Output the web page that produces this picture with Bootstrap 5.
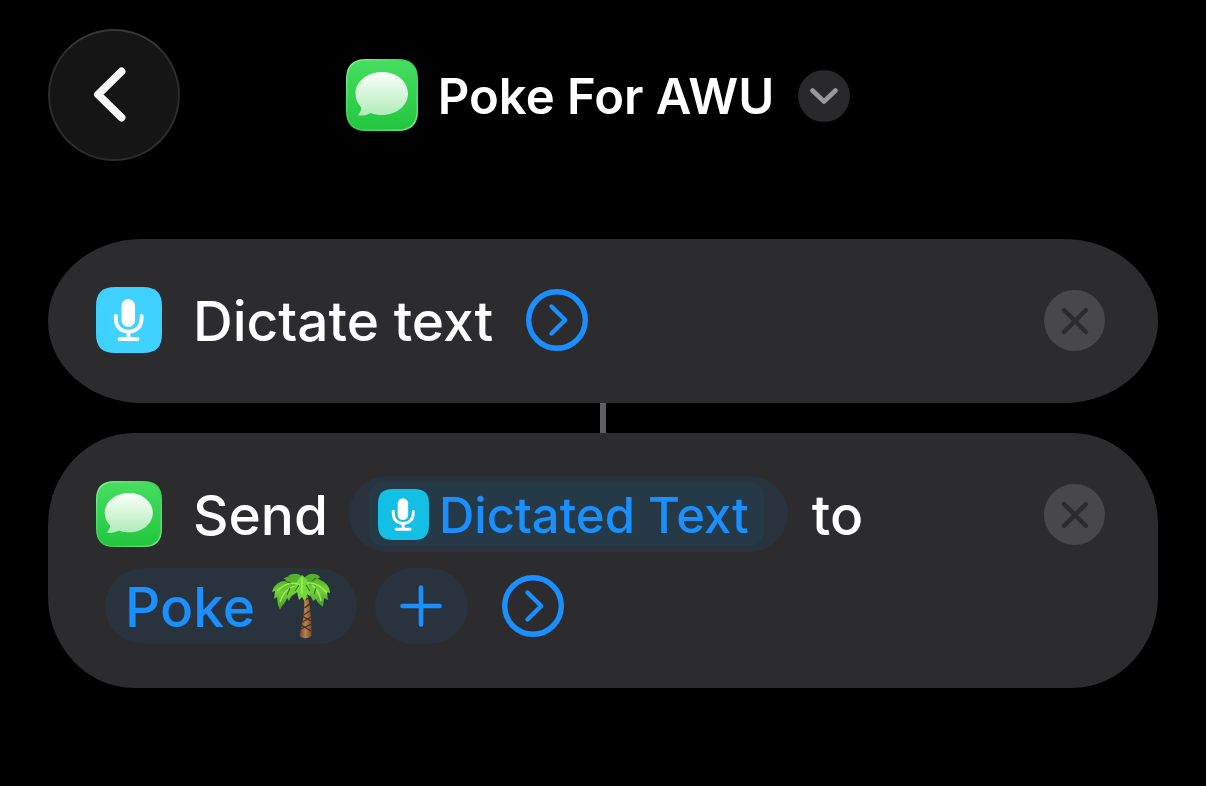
<!DOCTYPE html>
<html lang="en" data-bs-theme="dark">
<head>
<meta charset="utf-8">
<meta name="viewport" content="width=device-width, initial-scale=1">
<title>Poke For AWU</title>
<link href="https://cdn.jsdelivr.net/npm/bootstrap@5.3.0/dist/css/bootstrap.min.css" rel="stylesheet">
<style>
  body { background: #000; color: #fff; font-family: Inter, "Liberation Sans", sans-serif; }
  button { border: 0; padding: 0; background: none; color: inherit; }
  svg { display: block; }
  .page-pad { padding: 29px 48px; }
  .topbar { display: grid; grid-template-columns: 132px 1fr 132px; margin-bottom: 78px; }
  .back-btn { width: 132px; height: 132px; background: #151515; border: 2px solid #2c2c2c; border-top-color: #363636; }
  .title-group { gap: 20px; padding-right: 10px; }
  .page-title { font-size: 49px; line-height: 60px; font-weight: 600; padding-top: 3px; }
  .more-btn { width: 52px; height: 52px; background: #29292b; color: #98989d; margin: 2px 0 0 4px; }
  .action-card { background: #2c2c2e; padding: 43px 53px 45px 48px; border-radius: 94px / 82px; }
  .action-tall { padding-bottom: 44px; border-radius: 86px / 92px; }
  .connector { width: 6px; height: 30px; background: #5f5f62; }
  .action-line { row-gap: 16px; }
  .action-line > * { flex: none; }
  .word, .token { font-size: 55px; font-weight: 500; }
  .word { line-height: 74px; padding-top: 2px; }
  .app-icon { margin-right: 31px; }
  .token { height: 76px; line-height: 76px; background: #28333d; color: #1a8fff; margin: 0 9px; }
  .token-text { padding: 0 25px 0 20px; }
  .token-text span { padding-top: 2px; }
  .token-plus { width: 93px; }
  .chip { height: 64px; background: #263947; border-radius: 14px; padding: 0 15px 0 9px; gap: 10px; font-size: 49px; line-height: 60px; }
  .chip span { padding-top: 4px; }
  .token-var { padding: 0 24px 0 20px; margin-left: 21px; margin-right: 24px; }
  .expand-btn { color: #1a8fff; margin-left: 33px; }
  .token + .expand-btn { margin-left: 25px; }
  .remove-btn { width: 61px; height: 61px; background: #48484b; color: #2c2c2e; margin-top: 8px; }
</style>
</head>
<body>
<svg width="0" height="0" class="position-absolute" aria-hidden="true">
  <defs>
    <linearGradient id="green" x1="0" y1="0" x2="0" y2="1"><stop offset="0" stop-color="#46de60"/><stop offset="1" stop-color="#22c63e"/></linearGradient>
    <linearGradient id="greenEdge" x1="0" y1="0" x2="1" y2="1"><stop offset="0" stop-color="#8af29a"/><stop offset=".5" stop-color="#35cd4e"/><stop offset="1" stop-color="#7ae68b"/></linearGradient>
    <linearGradient id="bubble" x1="0" y1="0" x2="0" y2="1"><stop offset="0" stop-color="#fbfffb"/><stop offset="1" stop-color="#b0ecb8"/></linearGradient>
    <linearGradient id="trunk" x1="0" y1="0" x2="1" y2="0"><stop offset="0" stop-color="#6b4228"/><stop offset=".5" stop-color="#b98253"/><stop offset="1" stop-color="#74472a"/></linearGradient>
    <linearGradient id="leaf" x1="0" y1="0" x2="0" y2="1"><stop offset="0" stop-color="#4fa825"/><stop offset=".5" stop-color="#74d036"/><stop offset="1" stop-color="#3f9a2a"/></linearGradient>
    <symbol id="messages" viewBox="0 0 72 72">
      <path d="M20 .75H52C65 .75 71.25 7 71.25 20V52C71.25 65 65 71.25 52 71.25H20C7 71.25 .75 65 .75 52V20C.75 7 7 .75 20 .75Z" fill="url(#green)" stroke="url(#greenEdge)" stroke-width="1.5"/>
      <path d="M36 13C50.500 13 62 22.500 62 34.500S50.500 56 36 56C32 56 28 55.400 24.800 54C21.500 56 16.500 56.900 12.700 56.500C12 56.400 12 55.800 12.500 55.300C14.300 53.300 15.300 51 15.300 48.500C11.500 44.500 9.500 39.800 9.500 34.500C9.500 22.500 21.500 13 36 13Z" fill="url(#bubble)"/>
    </symbol>
    <symbol id="mic" viewBox="0 0 66 66">
      <path d="M19 0H47C60 0 66 6 66 19V47C66 60 60 66 47 66H19C6 66 0 60 0 47V19C0 6 6 0 19 0Z" fill="currentColor"/>
      <rect x="25.500" y="12" width="13.500" height="28" rx="6.750" fill="#fff"/>
      <path d="M19.800 29V32C19.800 39.500 25 44.700 32.500 44.700S45.600 39.500 45.600 32V29M32.500 45V52M23.500 52H41.500" fill="none" stroke="#fff" stroke-width="3.800" stroke-linecap="round"/>
    </symbol>
    <symbol id="expand" viewBox="0 0 62 62">
      <circle cx="31" cy="31" r="28.300" fill="none" stroke="currentColor" stroke-width="5.400"/>
      <path d="M25.500 17.500 39.200 31 25.500 44.500" fill="none" stroke="currentColor" stroke-width="4.400" stroke-linecap="round" stroke-linejoin="round"/>
    </symbol>
    <symbol id="cross" viewBox="0 0 28 28"><path d="M3 3 25 25M25 3 3 25" stroke="currentColor" stroke-width="4.400" stroke-linecap="round"/></symbol>
  </defs>
</svg>

<div class="page-pad">
  <header class="topbar align-items-center">
    <button type="button" class="back-btn rounded-circle d-flex align-items-center justify-content-center" aria-label="Back">
      <svg width="44" height="60" viewBox="0 0 44 60"><path d="M29.500 6.500 6 29.500 29.500 52.500" fill="none" stroke="#f8f8f8" stroke-width="7.800" stroke-linecap="round" stroke-linejoin="round"/></svg>
    </button>
    <div class="title-group d-flex align-items-center justify-content-center">
      <svg width="72" height="72" aria-hidden="true"><use href="#messages"/></svg>
      <h1 class="page-title text-nowrap mb-0">Poke For AWU</h1>
      <button type="button" class="more-btn rounded-circle d-flex align-items-center justify-content-center" aria-label="Shortcut options">
        <svg width="28" height="16" viewBox="0 0 28 16"><path d="M2.500 2.500 14 13.500 25.500 2.500" fill="none" stroke="currentColor" stroke-width="4.600" stroke-linecap="round" stroke-linejoin="round"/></svg>
      </button>
    </div>
  </header>

  <main>
    <section class="action-card d-flex align-items-start">
      <div class="action-line d-flex flex-wrap align-items-center flex-grow-1">
        <svg class="app-icon" width="66" height="66" color="#3fd1ff" aria-hidden="true"><use href="#mic"/></svg>
        <span class="word">Dictate text</span>
        <button type="button" class="expand-btn" aria-label="Show more"><svg width="62" height="62"><use href="#expand"/></svg></button>
      </div>
      <button type="button" class="remove-btn rounded-circle d-flex flex-shrink-0 align-items-center justify-content-center" aria-label="Remove action"><svg width="28" height="28"><use href="#cross"/></svg></button>
    </section>

    <div class="connector mx-auto"></div>

    <section class="action-card action-tall d-flex align-items-start">
      <div class="action-line d-flex flex-wrap align-items-center flex-grow-1">
        <svg class="app-icon" width="66" height="66" aria-hidden="true"><use href="#messages"/></svg>
        <span class="word">Send</span>
        <button type="button" class="token token-var rounded-pill d-flex align-items-center">
          <span class="chip d-flex align-items-center">
            <svg width="51" height="51" color="#14bfe6" aria-hidden="true"><use href="#mic"/></svg>
            <span>Dictated Text</span>
          </span>
        </button>
        <span class="word">to</span>
        <button type="button" class="token token-text rounded-pill d-flex align-items-center">
          <span>Poke&nbsp;</span>
          <svg width="62" height="68" viewBox="0 0 62 68" role="img" aria-label="palm tree">
            <path d="M33 22C36 34 33 50 29.500 63.500C32 67 38 67 41.500 64C42 50 40.500 34 37 21Z" fill="url(#trunk)"/>
            <path d="M34 29 38.500 26M34.500 36 39.500 32M33.500 43 40.500 38.500M32.500 50 41 45M31 57 41.500 52M32 44 41 49M31 53 41 59" stroke="#4a2b18" stroke-width="1.300" fill="none"/>
            <path d="M33 13C29 4 21 1 13 7C16 7 17 8 15 9C9 9 4 13 2 20L5 19 4 27 7 25 8 33 10 38C12 33 15 32 17 26L19 29C21 23 25 22 27 20L35 16Z" fill="url(#leaf)"/>
            <path d="M33 14C36 4 44 0 50 5L46 6C55 9 60 14 60 21L57 20 58 28 54 26 53 35C50 32 48 32 46 27L43 29C41 24 39 22 37 20Z" fill="url(#leaf)"/>
            <path d="M31 4C29 1 22 1 18 4L30 12ZM34 7C38 0 46 1 50 5L38 14Z" fill="#55b12b"/>
            <path d="M32 3C27 8 24 13 25 21L27 20 29 28 32 25 35 30 37 22 40 24C41 13 37 7 32 3Z" fill="#75d83a"/>
            <path d="M32 6V22M30 13C23 9 14 12 7 19M25 14C18 16 13 20 10 30M37 11C45 10 52 15 57 21M42 13C47 17 50 22 51 29" fill="none" stroke="#a5ee60" stroke-width="1.300"/>
            <path d="M29 13 25 19M36 13 40 19M20 16 17 23M46 16 44 22M15 9 21 11M46 6 42 9" stroke="#2f7d20" stroke-width="1.200"/>
          </svg>
        </button>
        <button type="button" class="token token-plus rounded-pill d-flex align-items-center justify-content-center" aria-label="Add recipient">
          <svg width="42" height="42" viewBox="0 0 42 42"><path d="M21 2.500V39.500M2.500 21H39.500" stroke="currentColor" stroke-width="4.600" stroke-linecap="round"/></svg>
        </button>
        <button type="button" class="expand-btn" aria-label="Show more"><svg width="62" height="62"><use href="#expand"/></svg></button>
      </div>
      <button type="button" class="remove-btn rounded-circle d-flex flex-shrink-0 align-items-center justify-content-center" aria-label="Remove action"><svg width="28" height="28"><use href="#cross"/></svg></button>
    </section>
  </main>
</div>
<script src="https://cdn.jsdelivr.net/npm/bootstrap@5.3.0/dist/js/bootstrap.bundle.min.js"></script>
</body>
</html>
